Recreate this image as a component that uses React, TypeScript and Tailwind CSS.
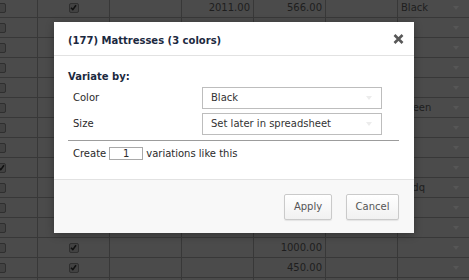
type Row = {
  left?: boolean;
  mid?: boolean;
  c3?: string;
  c4?: string;
  last?: string;
};

const rows: Row[] = [
  { mid: true, c3: "2011.00", c4: "566.00", last: "Black" },
  { mid: true },
  {},
  {},
  {},
  { last: "Green" },
  {},
  {},
  { left: true },
  { last: "asdq" },
  {},
  {},
  { mid: true, c4: "1000.00" },
  { mid: true, c4: "450.00" },
  {},
];

const Box = ({ checked }: { checked?: boolean }) => (
  <div className="flex h-[10px] w-[10px] items-center justify-center rounded-[2px] border border-[#2f2f2f] bg-[#424242]">
    {checked && (
      <svg width="7" height="7" viewBox="0 0 7 7">
        <path d="M1 3.8 L2.8 5.6 L6 1.2" fill="none" stroke="#111" strokeWidth="1.6" />
      </svg>
    )}
  </div>
);

const Arrow = ({ color }: { color: string }) => (
  <svg width="6" height="4" viewBox="0 0 6 4">
    <path d="M0 0 H6 L3 4 Z" fill={color} />
  </svg>
);

const cell = "h-full shrink-0 border-r border-[#383838] flex items-center";

const Sheet = () => (
  <div className="ml-[-20px] mt-[-2px] w-[520px] text-[#1e1e1e]">
    {rows.map((r, i) => (
      <div key={i} className="flex h-[20px] border-b border-[#383838]">
        <div className={`${cell} w-[58px] pl-[16px]`}>
          <Box checked={r.left} />
        </div>
        <div className={`${cell} w-[72px] justify-center`}>
          {r.mid && <Box checked />}
        </div>
        <div className={`${cell} w-[72px]`} />
        <div className={`${cell} w-[72px] justify-end pr-[3px]`}>{r.c3}</div>
        <div className={`${cell} w-[72px] justify-end pr-[3px]`}>{r.c4}</div>
        <div className={`${cell} w-[72px]`} />
        <div className="flex h-full w-[90px] shrink-0 items-center justify-between pl-[3px] pr-[29px]">
          <span>{r.last}</span>
          <Arrow color="#565656" />
        </div>
      </div>
    ))}
  </div>
);

const Select = ({ value }: { value: string }) => (
  <div className="flex h-[22px] w-[180px] items-center justify-between border border-[#bdbdbd] bg-white pl-[8px] pr-[9px] text-[#333]">
    <span>{value}</span>
    <Arrow color="#ececec" />
  </div>
);

const Button = ({ label, w }: { label: string; w: string }) => (
  <button
    className={`${w} h-[26px] rounded-[2px] border border-[#cacaca] bg-gradient-to-b from-white to-[#f1f1f1] text-[#555] shadow-[0_1px_1px_rgba(0,0,0,0.08)]`}
  >
    {label}
  </button>
);

export default function App() {
  return (
    <div
      className="relative h-[280px] w-[469px] overflow-hidden bg-[#4b4b4b] text-[10px] leading-[12px]"
      style={{ fontFamily: '"DejaVu Sans", Verdana, sans-serif' }}
    >
      <Sheet />

      {/* dialog */}
      <div className="absolute left-[54px] top-[22px] w-[360px] bg-white shadow-[0_2px_8px_rgba(0,0,0,0.3)]">
        <div className="flex h-[34px] justify-between border-b border-[#e2e2e2] pr-[10px]">
          <div className="pl-[14px] pt-[13px] font-bold text-[#1b2940]">
            (177) Mattresses (3 colors)
          </div>
          <svg className="mt-[12px]" width="11" height="10" viewBox="0 0 11 10">
            <path d="M1.5 1 L9.5 9 M9.5 1 L1.5 9" stroke="#585858" strokeWidth="2.6" />
          </svg>
        </div>

        <div className="h-[123px] pl-[14px] pr-[15px] pt-[15px]">
          <div className="font-bold text-[#1b2940]">Variate by:</div>
          <div className="mt-[4px] grid grid-cols-[129px_180px] gap-y-[4px] pl-[5px] text-[#2a2a2a]">
            <div className="flex items-center">Color</div>
            <Select value="Black" />
            <div className="flex items-center">Size</div>
            <Select value="Set later in spreadsheet" />
          </div>
          <div className="mt-[5px] h-px bg-[#9c9c9c]" />
          <div className="mt-[6px] flex h-[13px] items-center gap-[3px] pl-[5px] text-[#2a2a2a]">
            <span>Create</span>
            <div className="flex h-[13px] w-[34px] items-center justify-center border border-[#a9a9a9]">1</div>
            <span>variations like this</span>
          </div>
        </div>

        <div className="flex h-[54px] justify-end gap-[14px] border-t border-[#e2e2e2] bg-[#f8f8f8] pr-[15px] pt-[14px]">
          <Button label="Apply" w="w-[48px]" />
          <Button label="Cancel" w="w-[53px]" />
        </div>
      </div>
    </div>
  );
}
